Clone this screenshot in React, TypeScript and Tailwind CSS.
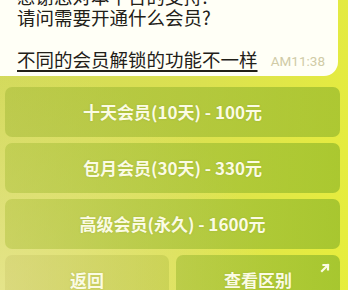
import React from "react";

const btnText = "text-[17px] font-bold text-[#fbfbe4]";

function Btn({ children, className = "", arrow = false }: { children: React.ReactNode; className?: string; arrow?: boolean }) {
  return (
    <div className={`relative flex items-center justify-center h-[50px] rounded-[7px] ${className}`}>
      <span className={btnText} style={{ textShadow: "0 0 2px rgba(120,140,20,0.3)" }}>{children}</span>
      {arrow && (
        <svg className="absolute right-[9px] top-[7px]" width="12" height="12" viewBox="0 0 12 12">
          <path d="M3 9 L9 3 M4.5 3 H9 V7.5" stroke="#fbfbe4" strokeWidth="2.2" fill="none" strokeLinecap="square" />
        </svg>
      )}
    </div>
  );
}

export default function App() {
  return (
    <div
      className="relative w-[348px] h-[290px] overflow-hidden bg-[linear-gradient(100deg,#d2d95a_0%,#dbe150_55%,#e7ee3c_100%)]"
      style={{ fontFamily: "'Noto Sans CJK SC', 'Noto Sans', sans-serif" }}
    >
      <div className="absolute inset-0 bg-[radial-gradient(ellipse_at_0%_100%,rgba(236,232,160,0.7),rgba(236,232,160,0)_55%)]" />
      <div className="relative flex flex-col">
        <div className="mr-[10px] -mt-[14px] bg-[#fffff6] rounded-br-[14px] pl-[17px] pr-[12px] pb-[6px] text-[18.5px] leading-[21px] text-[#222018]">
          <div>感谢您对本平台的支持!</div>
          <div>请问需要开通什么会员?</div>
          <div className="h-[21px]" />
          <div className="flex items-end justify-between">
            <span className="underline underline-offset-[3px] decoration-[1.5px]">不同的会员解锁的功能不一样</span>
            <span className="text-[13.5px] leading-[15px] text-[#d0cba6] mb-[1px] mr-[1px]" style={{ fontFamily: "Roboto, sans-serif" }}>AM11:38</span>
          </div>
        </div>
        <div className="flex flex-col gap-[6px] pl-[5px] pr-[8px] mt-[11px]">
          <Btn className="bg-[linear-gradient(90deg,rgba(168,188,60,0.55),rgba(152,186,45,0.72))]">十天会员(10天) - 100元</Btn>
          <Btn className="bg-[linear-gradient(90deg,rgba(172,192,62,0.5),rgba(148,186,42,0.72))]">包月会员(30天) - 330元</Btn>
          <Btn className="bg-[linear-gradient(90deg,rgba(178,194,66,0.5),rgba(144,184,42,0.72))]">高级会员(永久) - 1600元</Btn>
          <div className="flex gap-[7px]">
            <Btn className="flex-1 bg-[linear-gradient(90deg,rgba(208,206,112,0.5),rgba(184,196,72,0.5))]">返回</Btn>
            <Btn arrow className="flex-1 bg-[linear-gradient(90deg,rgba(164,190,56,0.6),rgba(142,184,42,0.72))]">查看区别</Btn>
          </div>
        </div>
      </div>
    </div>
  );
}
